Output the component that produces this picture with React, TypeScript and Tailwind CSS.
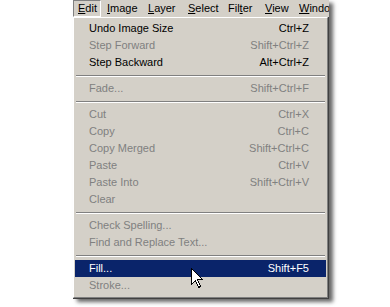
import React from "react";

type Item = { label: string; shortcut?: string; disabled?: boolean; active?: boolean } | "sep";

const items: Item[] = [
  { label: "Undo Image Size", shortcut: "Ctrl+Z" },
  { label: "Step Forward", shortcut: "Shift+Ctrl+Z", disabled: true },
  { label: "Step Backward", shortcut: "Alt+Ctrl+Z" },
  "sep",
  { label: "Fade...", shortcut: "Shift+Ctrl+F", disabled: true },
  "sep",
  { label: "Cut", shortcut: "Ctrl+X", disabled: true },
  { label: "Copy", shortcut: "Ctrl+C", disabled: true },
  { label: "Copy Merged", shortcut: "Shift+Ctrl+C", disabled: true },
  { label: "Paste", shortcut: "Ctrl+V", disabled: true },
  { label: "Paste Into", shortcut: "Shift+Ctrl+V", disabled: true },
  { label: "Clear", disabled: true },
  "sep",
  { label: "Check Spelling...", disabled: true },
  { label: "Find and Replace Text...", disabled: true },
  "sep",
  { label: "Fill...", shortcut: "Shift+F5", active: true },
  { label: "Stroke...", disabled: true },
];

function Cursor() {
  return (
    <svg
      className="absolute left-[191px] top-[268px]"
      width="13"
      height="21"
      viewBox="0 0 13 21"
      shapeRendering="crispEdges"
    >
      <path
        d="M0.5 0.5 L0.5 16.5 L4.5 12.5 L7.5 19.5 L9.5 18.5 L6.5 11.5 L11.5 11.5 Z"
        fill="#fff"
        stroke="#000"
        strokeWidth="1"
      />
    </svg>
  );
}

export default function App() {
  return (
    <div className="relative w-[390px] h-[307px] bg-white pl-[73px] overflow-hidden font-['Liberation_Sans',Arial,sans-serif] text-[11px] leading-none">
      <div className="w-[256px] bg-[#d4d0c8] shadow-[4px_3px_4px_rgba(0,0,0,0.6)]">
        {/* menu bar */}
        <div className="flex h-[17px] items-stretch text-black whitespace-nowrap overflow-hidden">
          <div className="w-[28px] shrink-0 pl-[4px] flex items-center border-t border-l border-[#808080] border-r-white border-b-white border-r border-b">
            <span><u>E</u>dit</span>
          </div>
          <div className="w-[41px] shrink-0 pl-[6px] flex items-center"><span><u>I</u>mage</span></div>
          <div className="w-[40px] shrink-0 pl-[6px] flex items-center"><span><u>L</u>ayer</span></div>
          <div className="w-[40px] shrink-0 pl-[6px] flex items-center"><span><u>S</u>elect</span></div>
          <div className="w-[37px] shrink-0 pl-[6px] flex items-center"><span>Fil<u>t</u>er</span></div>
          <div className="w-[34px] shrink-0 pl-[6px] flex items-center"><span><u>V</u>iew</span></div>
          <div className="shrink-0 pl-[6px] flex items-center"><span><u>W</u>indow</span></div>
        </div>

        {/* dropdown */}
        <div className="border-r border-b border-[#404040]">
          <div className="border-t border-l border-white border-r-[#808080] border-b-[#808080] border-r border-b pt-[2px] pb-[3px] px-[1px]">
            {items.map((it, i) =>
              it === "sep" ? (
                <div key={i} className="h-[9px] flex flex-col justify-center px-[1px]">
                  <div className="h-px bg-[#808080]" />
                  <div className="h-px bg-white" />
                </div>
              ) : (
                <div
                  key={i}
                  className={
                    "h-[17px] flex items-center justify-between pl-[14px] pr-[17px] whitespace-nowrap " +
                    (it.active
                      ? "bg-[#0a246a] text-white"
                      : it.disabled
                      ? "text-[#808080]"
                      : "text-black")
                  }
                >
                  <span>{it.label}</span>
                  {it.shortcut && <span>{it.shortcut}</span>}
                </div>
              )
            )}
          </div>
        </div>
      </div>
      <Cursor />
    </div>
  );
}
